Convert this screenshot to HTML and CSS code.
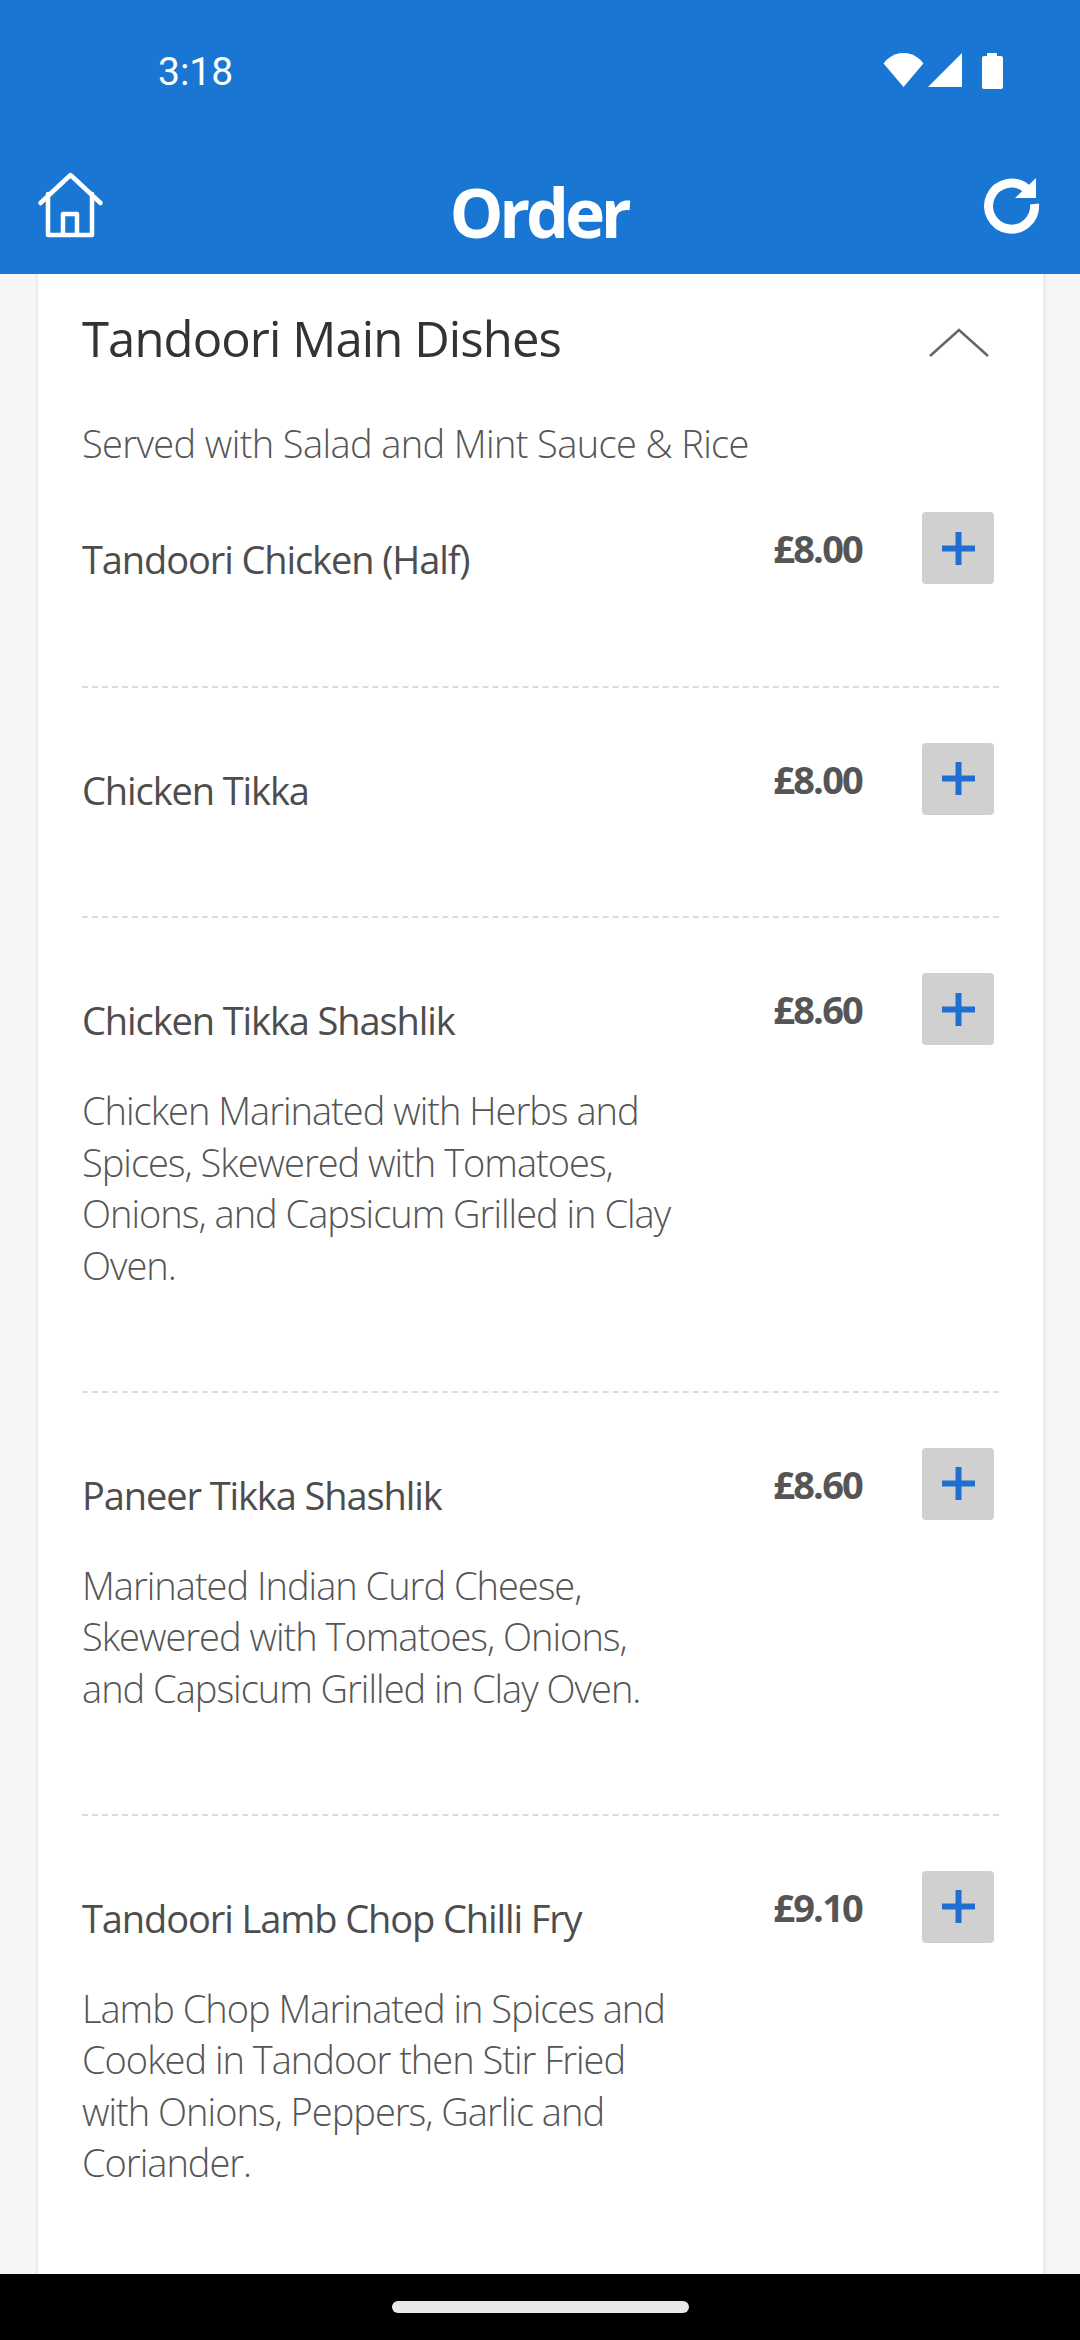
FILE: index.html
```html
<!DOCTYPE html>
<html lang="en">
<head>
<meta charset="utf-8">
<title>Order</title>
<link rel="stylesheet" href="styles.css">
</head>
<body>
<div class="app">
  <header class="top">
    <div class="status">
      <span class="time">3:18</span>
      <div class="status-icons">
        <svg class="ic-wifi" viewBox="0 0 41 34"><path d="M20.500 34 0.600 10.500C1.600 8.500 9 0 20.500 0S39.400 8.500 40.400 10.500Z" fill="#fff"/></svg>
        <svg class="ic-signal" viewBox="0 0 34 34"><path d="M34 0V34H0Z" fill="#fff"/></svg>
        <svg class="ic-battery" viewBox="0 0 21 36"><path d="M5 1a1 1 0 0 1 1-1h8a1 1 0 0 1 1 1v2h4a2 2 0 0 1 2 2v29a2 2 0 0 1-2 2H2a2 2 0 0 1-2-2V5a2 2 0 0 1 2-2h3Z" fill="#fff"/></svg>
      </div>
    </div>
    <div class="bar">
      <svg class="ic-home" viewBox="0 0 70 70"><path d="M4.500 33 34.500 5 64.500 33M12 24V65H56V24M27 65V44H41V65" fill="none" stroke="#fff" stroke-width="4.500" stroke-linejoin="round" stroke-linecap="round"/></svg>
      <h1 class="bar-title">Order</h1>
      <svg class="ic-refresh" viewBox="0 0 64 64"><path d="M54.500 30A23 23 0 1 1 46.300 14.400" fill="none" stroke="#fff" stroke-width="9"/><path d="M56 4V24H35Z" fill="#fff"/></svg>
    </div>
  </header>
  <main class="content">
    <section class="card">
      <div class="card-head">
        <h2 class="card-title">Tandoori Main Dishes</h2>
        <svg class="ic-chevron" viewBox="0 0 60 30"><path d="M1 28 30 2 59 28" fill="none" stroke="#666" stroke-width="2.500"/></svg>
      </div>
      <p class="card-sub">Served with Salad and Mint Sauce &amp; Rice</p>

      <article class="item">
        <div class="item-text"><h3 class="item-name">Tandoori Chicken (Half)</h3></div>
        <div class="item-buy"><span class="price">£8.00</span><button class="add"><svg class="ic-plus" viewBox="0 0 33 33"><path d="M13.500 0h6v13.500H33v6H19.500V33h-6V19.500H0v-6h13.500Z"/></svg></button></div>
      </article>
      <article class="item">
        <div class="item-text"><h3 class="item-name">Chicken Tikka</h3></div>
        <div class="item-buy"><span class="price">£8.00</span><button class="add"><svg class="ic-plus" viewBox="0 0 33 33"><path d="M13.500 0h6v13.500H33v6H19.500V33h-6V19.500H0v-6h13.500Z"/></svg></button></div>
      </article>
      <article class="item">
        <div class="item-text"><h3 class="item-name">Chicken Tikka Shashlik</h3>
          <p class="item-desc">Chicken Marinated with Herbs and<br>Spices, Skewered with Tomatoes,<br>Onions, and Capsicum Grilled in Clay<br>Oven.</p></div>
        <div class="item-buy"><span class="price">£8.60</span><button class="add"><svg class="ic-plus" viewBox="0 0 33 33"><path d="M13.500 0h6v13.500H33v6H19.500V33h-6V19.500H0v-6h13.500Z"/></svg></button></div>
      </article>
      <article class="item">
        <div class="item-text"><h3 class="item-name">Paneer Tikka Shashlik</h3>
          <p class="item-desc">Marinated Indian Curd Cheese,<br>Skewered with Tomatoes, Onions,<br>and Capsicum Grilled in Clay Oven.</p></div>
        <div class="item-buy"><span class="price">£8.60</span><button class="add"><svg class="ic-plus" viewBox="0 0 33 33"><path d="M13.500 0h6v13.500H33v6H19.500V33h-6V19.500H0v-6h13.500Z"/></svg></button></div>
      </article>
      <article class="item">
        <div class="item-text"><h3 class="item-name">Tandoori Lamb Chop Chilli Fry</h3>
          <p class="item-desc">Lamb Chop Marinated in Spices and<br>Cooked in Tandoor then Stir Fried<br>with Onions, Peppers, Garlic and<br>Coriander.</p></div>
        <div class="item-buy"><span class="price">£9.10</span><button class="add"><svg class="ic-plus" viewBox="0 0 33 33"><path d="M13.500 0h6v13.500H33v6H19.500V33h-6V19.500H0v-6h13.500Z"/></svg></button></div>
      </article>
    </section>
  </main>
  <footer class="nav"><span class="pill"></span></footer>
</div>
</body>
</html>
```
FILE: styles.css
```css
* { box-sizing: border-box; }
html, body { margin: 0; padding: 0; }
body { font-family: "Open Sans", "Liberation Sans", sans-serif; }
.app { width: 1080px; height: 2340px; display: flex; flex-direction: column; overflow: hidden; background: #f5f5f5; }

.top { height: 274px; background: #1976d2; flex: none; }
.status { height: 140px; padding: 53px 77px 0 158px; display: flex; justify-content: space-between; align-items: flex-start; }
.time { font-family: Roboto, sans-serif; font-size: 39px; line-height: 38px; color: #fff; }
.status-icons { display: flex; gap: 4px; }
.ic-wifi { width: 41px; height: 34px; }
.ic-signal { width: 34px; height: 34px; }
.ic-battery { width: 21px; height: 36px; margin-left: 16px; }

.bar { height: 134px; position: relative; display: flex; justify-content: space-between; align-items: flex-start; padding: 30px 36px 0 36px; }
.bar-title { position: absolute; left: 0; right: 0; top: 30px; margin: 0; text-align: center; font-size: 68px; line-height: 84px; font-weight: 700; color: #fff; letter-spacing: -4.200px; text-indent: -3px; }
.ic-home { width: 70px; height: 70px; }
.ic-refresh { width: 64px; height: 64px; margin-top: 4px; }

.content { flex: 1; min-height: 0; overflow: hidden; padding: 0 34px 0 36px; }
.card { background: #fff; border-left: 2px solid #ececec; border-right: 3px solid #ececec; padding: 0 44px; min-height: 100%; }
.card-head { display: flex; justify-content: space-between; align-items: flex-start; padding-top: 36px; height: 155px; }
.card-title { margin: 0; font-size: 49px; line-height: 56px; font-weight: 400; color: #333; letter-spacing: -0.900px; }
.ic-chevron { width: 60px; height: 30px; margin: 18px 10px 0 0; }
.card-sub { margin: 0; font-size: 38px; line-height: 28px; font-weight: 300; color: #555; letter-spacing: -0.620px; }

.item { display: flex; justify-content: space-between; padding-top: 55px; border-bottom: 2px dashed #dcdcdc; }
.item-text { width: 640px; padding-bottom: 99.500px; }
.item-name { margin: 23px 0 0; font-size: 38px; line-height: 48px; font-weight: 500; color: #4d4d4d; letter-spacing: -1.100px; }
.item-desc { margin: 41px 0 0; font-size: 38px; line-height: 51.500px; font-weight: 300; color: #555; letter-spacing: -1px; }
.item-buy { display: flex; align-items: flex-start; gap: 60px; padding: 0 5px 101.500px 0; }
.price { font-size: 38px; line-height: 72px; font-weight: 700; color: #555; letter-spacing: -1.800px; }
.add { width: 72px; height: 72px; border: 0; padding: 0; border-radius: 4px; background: #d0d0d0; display: flex; align-items: center; justify-content: center; }
.ic-plus { width: 33px; height: 33px; fill: #1f6fd0; }

.nav { height: 66px; flex: none; background: #000; display: flex; justify-content: center; padding-top: 27px; }
.pill { width: 297px; height: 12px; border-radius: 6px; background: #e8e8e8; }
```
